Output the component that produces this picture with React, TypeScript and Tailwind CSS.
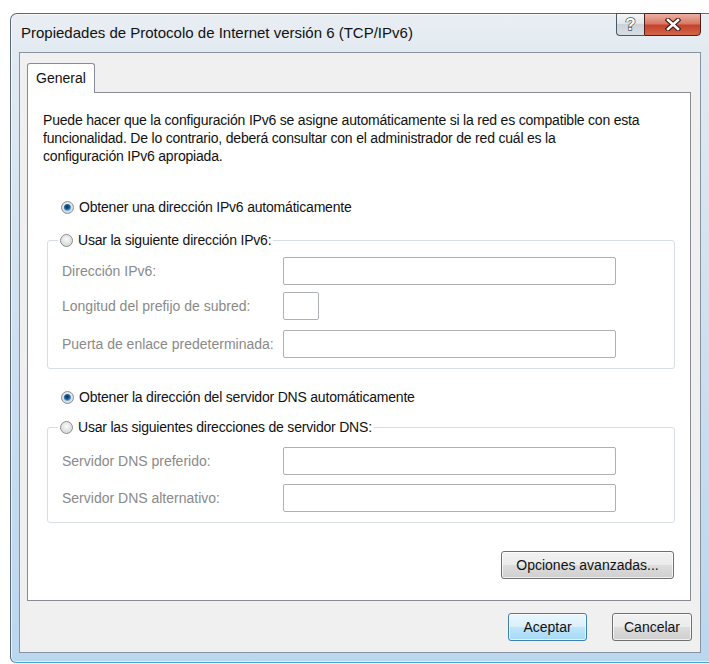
import React from "react";

const font = "font-['Liberation_Sans',Arial,sans-serif]";

const Radio = ({ checked = false }: { checked?: boolean }) => (
  <svg width="13" height="13" viewBox="0 0 13 13" className="shrink-0">
    <defs>
      <radialGradient id="rbOff" cx="50%" cy="40%" r="60%">
        <stop offset="0%" stopColor="#fbfbfb" />
        <stop offset="100%" stopColor="#d4d4d4" />
      </radialGradient>
      <radialGradient id="rbOn" cx="45%" cy="40%" r="60%">
        <stop offset="0%" stopColor="#0b2f52" />
        <stop offset="55%" stopColor="#1d5f99" />
        <stop offset="100%" stopColor="#7cc0ec" />
      </radialGradient>
    </defs>
    <circle cx="6.5" cy="6.5" r="6" fill="url(#rbOff)" stroke="#8e8f8f" strokeWidth="1" />
    {checked && <circle cx="6.5" cy="6.5" r="3.6" fill="url(#rbOn)" />}
  </svg>
);

const RadioRow = ({ checked, label }: { checked?: boolean; label: string }) => (
  <div className="flex h-[18px] items-center gap-[5px] whitespace-nowrap text-[14px] tracking-[-0.2px] text-[#111]">
    <Radio checked={checked} />
    <span>{label}</span>
  </div>
);

const Field = ({ label, small, className = "" }: { label: string; small?: boolean; className?: string }) => (
  <div className={`flex items-center pl-[4px] ${className}`}>
    <span className="w-[221px] whitespace-nowrap text-[14px] text-[#8a8a8a]">{label}</span>
    <div
      className={`h-[28px] rounded-[2px] border border-[#adb0b5] bg-white ${small ? "w-[36px]" : "w-[333px]"}`}
    />
  </div>
);

const VistaButton = ({ children, primary, className = "" }: { children: React.ReactNode; primary?: boolean; className?: string }) => (
  <button
    className={`flex h-[28px] items-center justify-center rounded-[3px] border text-[14px] text-[#111] shadow-[inset_0_0_0_1px_rgba(255,255,255,0.7)] ${
      primary
        ? "border-[#3c7fb1] bg-[linear-gradient(to_bottom,#eaf6fd_0%,#d9f0fc_50%,#bee6fd_50%,#a7d9f5_100%)]"
        : "border-[#707070] bg-[linear-gradient(to_bottom,#f2f2f2_0%,#ebebeb_50%,#dddddd_50%,#cfcfcf_100%)]"
    } ${className}`}
  >
    {children}
  </button>
);

export default function App() {
  return (
    <div className={`h-[664px] w-[709px] overflow-hidden bg-white pt-[13px] ${font}`}>
      {/* window frame */}
      <div className="ml-[10px] flex h-[650px] w-[704px] flex-col rounded-t-[7px] rounded-b-[6px] border border-[#5b6a77] border-b-[#3fa6d6] bg-[linear-gradient(to_bottom,#e9eef3_0%,#e0e9f1_8%,#cadeef_60%,#bad7ef_100%)] shadow-[inset_0_0_0_1px_rgba(255,255,255,0.6)]">
        {/* title bar */}
        <div className="flex h-[38px] shrink-0 items-start justify-between">
          <div className="whitespace-nowrap pl-[10px] pt-[9px] text-[15px] leading-[20px] text-[#111]">
            Propiedades de Protocolo de Internet versión 6 (TCP/IPv6)
          </div>
          <div className="-mt-px mr-[12px] flex">
            <div className="flex h-[23px] w-[28px] items-center justify-center rounded-bl-[4px] border border-r-0 border-[#4b5763] bg-[linear-gradient(to_bottom,#f4f6f8_0%,#e3e7eb_45%,#cbd2d9_50%,#d8dee4_100%)] text-[17px] font-bold leading-none text-white [-webkit-text-stroke:1.4px_#4a5561] [paint-order:stroke]">
              ?
            </div>
            <div className="flex h-[23px] w-[57px] items-center justify-center rounded-br-[4px] border border-[#4d1f18] bg-[linear-gradient(to_bottom,#ebb0a3_0%,#d97a66_45%,#c5432b_55%,#d2664c_100%)]">
              <svg width="16" height="13" viewBox="0 0 16 13">
                <path d="M3 2 L13 11 M13 2 L3 11" stroke="#3a1510" strokeWidth="4.6" strokeLinecap="square" />
                <path d="M3 2 L13 11 M13 2 L3 11" stroke="#ffffff" strokeWidth="2.6" strokeLinecap="square" />
              </svg>
            </div>
          </div>
        </div>

        {/* client area */}
        <div className="ml-[8px] flex h-[601px] w-[682px] shrink-0 flex-col border border-[#8793a0] bg-[#f0f0f0]">
          <div className="flex pl-[7px] pt-[10px]">
            <div className="relative z-10 -mb-px flex h-[30px] w-[68px] items-center justify-center rounded-t-[3px] border border-b-0 border-[#898c95] bg-white text-[14px] text-[#111]">
              General
            </div>
          </div>

          {/* tab page */}
          <div className="ml-[7px] flex h-[509px] w-[664px] flex-col border border-[#898c95] bg-white">
            <p className="whitespace-nowrap pl-[15px] pt-[18px] text-[14px] leading-[18px] tracking-[-0.2px] text-[#111]">
              Puede hacer que la configuración IPv6 se asigne automáticamente si la red es compatible con esta
              <br />
              funcionalidad. De lo contrario, deberá consultar con el administrador de red cuál es la
              <br />
              configuración IPv6 apropiada.
            </p>

            <div className="ml-[33px] mt-[33px]">
              <RadioRow checked label="Obtener una dirección IPv6 automáticamente" />
            </div>

            <fieldset className="ml-[19px] mt-[15px] w-[628px] rounded-[3px] border border-[#d5dfe5] pb-[10px] pl-[10px]">
              <legend className="px-[2px]">
                <RadioRow label="Usar la siguiente dirección IPv6:" />
              </legend>
              <Field className="mt-[8px]" label="Dirección IPv6:" />
              <Field className="mt-[7px]" label="Longitud del prefijo de subred:" small />
              <Field className="mt-[10px]" label="Puerta de enlace predeterminada:" />
            </fieldset>

            <div className="ml-[33px] mt-[19px]">
              <RadioRow checked label="Obtener la dirección del servidor DNS automáticamente" />
            </div>

            <fieldset className="ml-[19px] mt-[12px] w-[628px] rounded-[3px] border border-[#d5dfe5] pb-[10px] pl-[10px]">
              <legend className="px-[2px]">
                <RadioRow label="Usar las siguientes direcciones de servidor DNS:" />
              </legend>
              <Field className="mt-[11px]" label="Servidor DNS preferido:" />
              <Field className="mt-[9px]" label="Servidor DNS alternativo:" />
            </fieldset>

            <div className="mr-[16px] mt-[28px] flex justify-end">
              <VistaButton className="w-[173px]">Opciones avanzadas...</VistaButton>
            </div>
          </div>

          <div className="mr-[8px] mt-[12px] flex justify-end gap-[25px]">
            <VistaButton primary className="w-[79px]">
              Aceptar
            </VistaButton>
            <VistaButton className="w-[80px]">Cancelar</VistaButton>
          </div>
        </div>
      </div>
    </div>
  );
}
